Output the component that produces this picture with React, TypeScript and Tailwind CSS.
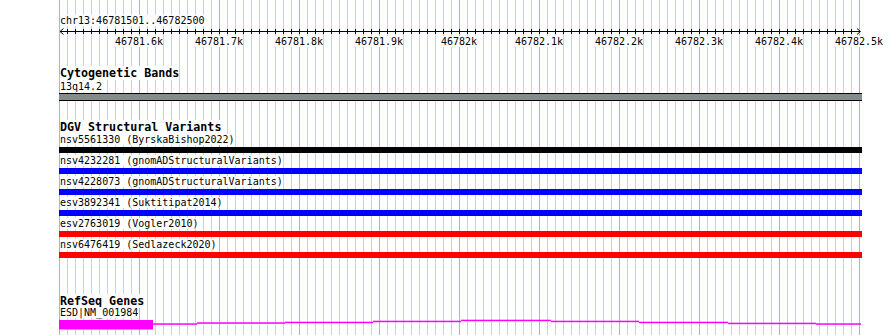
const ticks = ["46781.6k", "46781.7k", "46781.8k", "46781.9k", "46782k", "46782.1k", "46782.2k", "46782.3k", "46782.4k", "46782.5k"];

const variants = [
  { label: "nsv5561330 (ByrskaBishop2022)", color: "bg-black" },
  { label: "nsv4232281 (gnomADStructuralVariants)", color: "bg-[#0000ff]" },
  { label: "nsv4228073 (gnomADStructuralVariants)", color: "bg-[#0000ff]" },
  { label: "esv3892341 (Suktitipat2014)", color: "bg-[#0000ff]" },
  { label: "esv2763019 (Vogler2010)", color: "bg-[#ff0000]" },
  { label: "nsv6476419 (Sedlazeck2020)", color: "bg-[#ff0000]" },
];

// intron segments of the gene glyph: [x1, x2, y] relative to the track
const introns: [number, number, number][] = [
  [94, 138, 4.3],
  [138, 226, 3.3],
  [226, 314, 2.7],
  [314, 402, 1.7],
  [402, 492, 0.7],
  [492, 580, 1.7],
  [580, 669, 2.7],
  [669, 757, 3.7],
  [757, 802, 4.3],
];

function Grid() {
  const lines = Array.from({ length: 101 }, (_, i) => i);
  return (
    <svg className="absolute inset-0" width={890} height={335}>
      {lines.map((i) => (
        <line
          key={i}
          x1={59.5 + i * 8}
          x2={59.5 + i * 8}
          y1={0}
          y2={335}
          stroke={i % 10 === 0 ? "#8cc0e6" : "#a8e2e2"}
          strokeWidth={1}
        />
      ))}
    </svg>
  );
}

function Ruler() {
  const marks = Array.from({ length: 99 }, (_, i) => i + 1);
  return (
    <svg width={803} height={10} className="block">
      <line x1={1} x2={801} y1={5.5} y2={5.5} stroke="black" />
      {marks.map((i) => (
        <line key={i} x1={i * 8 + 0.5} x2={i * 8 + 0.5} y1={3} y2={8} stroke="black" />
      ))}
      <polyline points="4.5,2.5 1,5.5 4.5,8.5" fill="none" stroke="black" />
      <polyline points="798,2.5 801.5,5.5 798,8.5" fill="none" stroke="black" />
    </svg>
  );
}

function Title({ children }: { children: string }) {
  return (
    <div className="text-[11.67px] leading-[13px] font-bold">
      <span className="bg-white">{children}</span>
    </div>
  );
}

function Label({ children }: { children: string }) {
  return (
    <div className="text-[10px] leading-[11px]">
      <span className="bg-white">{children}</span>
    </div>
  );
}

export default function App() {
  return (
    <div className="relative h-[335px] w-[890px] overflow-hidden bg-white text-black font-['DejaVu_Sans_Mono',monospace]">
      <Grid />
      <div className="relative ml-[59px] flex w-[803px] flex-col pt-[15px]">
        <div className="pl-px">
          <Label>chr13:46781501..46782500</Label>
        </div>
        <Ruler />
        <div className="flex pl-[40px] text-[10px] leading-[11px]">
          {ticks.map((t) => (
            <div key={t} className="flex w-[80px] shrink-0 justify-center">
              <span className="bg-white">{t}</span>
            </div>
          ))}
        </div>

        <div className="mt-[20px] pl-px">
          <Title>Cytogenetic Bands</Title>
          <div className="mt-px">
            <Label>13q14.2</Label>
          </div>
        </div>
        <div className="mt-[1px] h-[8px] border-y border-black bg-[#8a8a8a]" />

        <div className="mt-[20px] pl-px">
          <Title>DGV Structural Variants</Title>
        </div>
        <div className="flex flex-col">
          {variants.map((v) => (
            <div key={v.label} className="flex flex-col pb-[2px]">
              <div className="pl-px">
                <Label>{v.label}</Label>
              </div>
              <div className={`mt-[2px] h-[6px] ${v.color}`} />
            </div>
          ))}
        </div>

        <div className="mt-[35px] pl-px">
          <Title>RefSeq Genes</Title>
          <div className="text-[10px] leading-[10px]">
            <span className="bg-white">ESD|NM_001984</span>
          </div>
        </div>
        <svg width={803} height={13} className="block">
          <rect x={0} y={2} width={94} height={9.5} fill="#ff00ff" />
          {introns.map(([a, b, y]) => (
            <rect key={a} x={a} y={y + 1} width={b - a} height={1.5} fill="#ff00ff" />
          ))}
        </svg>
      </div>
    </div>
  );
}
